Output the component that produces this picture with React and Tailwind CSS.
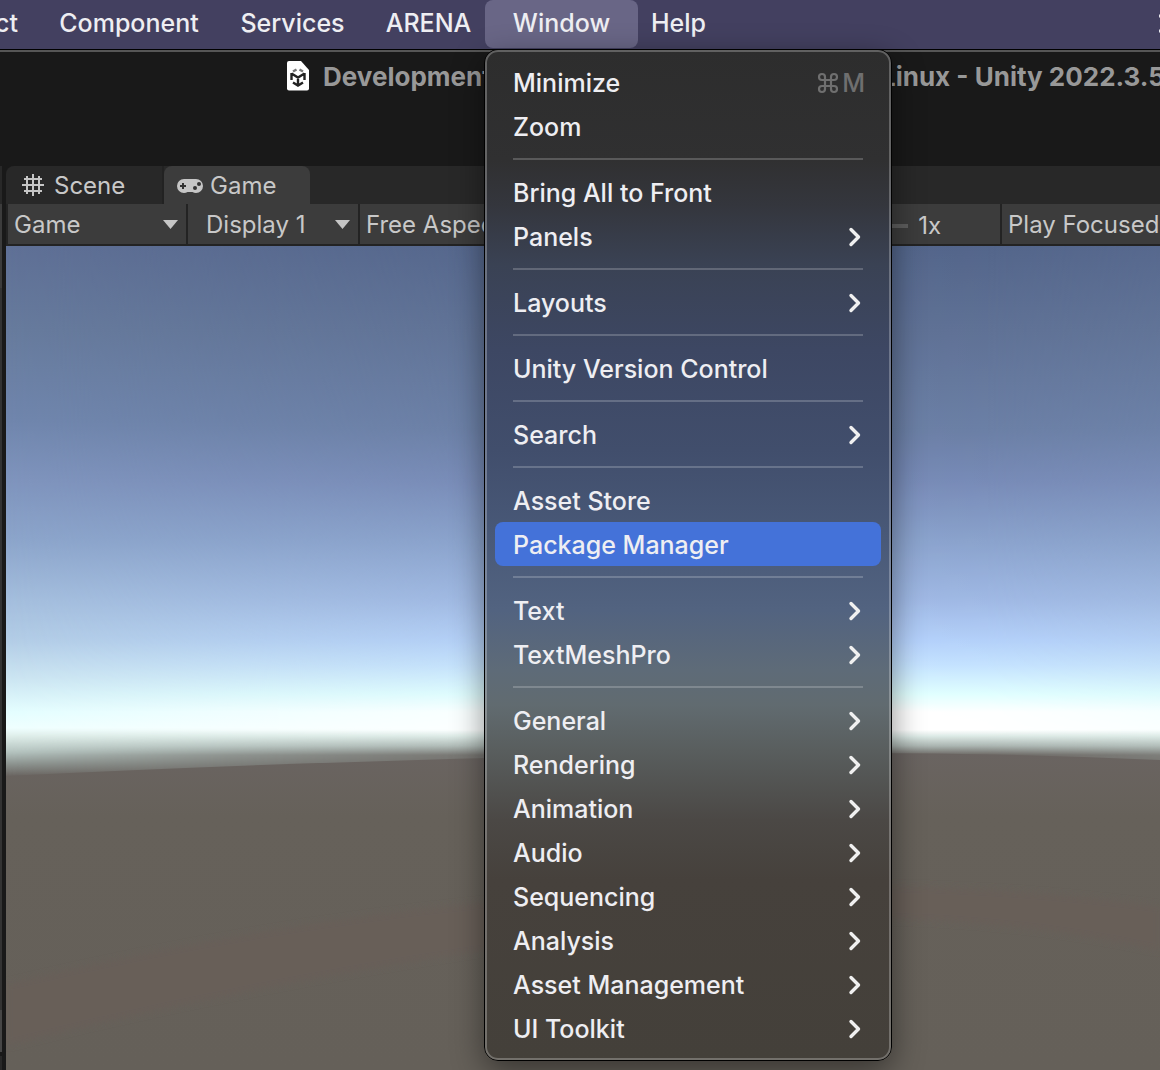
import React from "react";

const skyLeft = [
  [246, "#5f7096"], [330, "#677b9d"], [420, "#7086ad"], [480, "#7f94bd"], [540, "#8ca5cb"], [600, "#a4bedd"], [640, "#b3cde6"],
  [680, "#cde6f2"], [712, "#e4feff"], [728, "#efffff"], [736, "#dfeeea"], [752, "#b5c4c0"], [764, "#8d9490"], [776, "#6a6561"],
];
const skyCenter = [
  [246, "#53658a"], [330, "#5f7195"], [430, "#6b7fa5"], [480, "#778ab6"], [540, "#8aa2cc"], [600, "#9fb8e4"], [640, "#b3d0fa"],
  [665, "#c4e2ff"], [694, "#e0ffff"], [712, "#ffffff"], [730, "#ffffff"], [736, "#dce9e5"], [746, "#a9b3af"], [755, "#6a6561"],
];

function Stops({ list }) {
  return list.map(([y, c]) => <stop key={y} offset={(y - 246) / 824} stopColor={c} />);
}

function Scene() {
  return (
    <svg className="absolute inset-0 h-full w-full" viewBox="0 0 1154 824" preserveAspectRatio="none" aria-hidden="true">
      <defs>
        <linearGradient id="edge" x1="0" y1="0" x2="0" y2="1"><Stops list={skyLeft} /></linearGradient>
        <linearGradient id="middle" x1="0" y1="0" x2="0" y2="1"><Stops list={skyCenter} /></linearGradient>
        <linearGradient id="fade" x1="0" y1="0" x2="1" y2="0">
          <stop offset="0" stopColor="#000" />
          <stop offset="0.2" stopColor="#707070" />
          <stop offset="0.42" stopColor="#d0d0d0" />
          <stop offset="0.7" stopColor="#fff" />
          <stop offset="0.85" stopColor="#f4f4f4" />
          <stop offset="1" stopColor="#b0b0b0" />
        </linearGradient>
        <linearGradient id="ground" x1="0" y1="0" x2="0" y2="1">
          <stop offset="0" stopColor="#6a6461" />
          <stop offset="0.2" stopColor="#66615a" />
          <stop offset="1" stopColor="#656059" />
        </linearGradient>
        <mask id="blend"><rect width="1154" height="824" fill="url(#fade)" /></mask>
        <filter id="soft"><feGaussianBlur stdDeviation="3" /></filter>
      </defs>
      <rect width="1154" height="824" fill="url(#edge)" />
      <rect width="1154" height="824" fill="url(#middle)" mask="url(#blend)" />
      <path d="M0 530Q480 507 844 507Q1000 507 1154 514V824H0Z" fill="url(#ground)" />
      <path d="M0 738Q240 680 478 656Q860 620 1154 660V705Q860 640 478 705Q240 740 0 800Z" fill="#685f59" filter="url(#soft)" />
    </svg>
  );
}

const menu = [
  [["Minimize", "key"], ["Zoom"]],
  [["Bring All to Front"], ["Panels", "sub"]],
  [["Layouts", "sub"]],
  [["Unity Version Control"]],
  [["Search", "sub"]],
  [["Asset Store"], ["Package Manager", "on"]],
  [["Text", "sub"], ["TextMeshPro", "sub"]],
  [["General", "sub"], ["Rendering", "sub"], ["Animation", "sub"], ["Audio", "sub"], ["Sequencing", "sub"], ["Analysis", "sub"], ["Asset Management", "sub"], ["UI Toolkit", "sub"]],
];

function Item({ label, kind }) {
  return (
    <button
      role="menuitem"
      className={
        "flex h-11 w-full items-center justify-between whitespace-nowrap rounded-lg pl-[18px] pr-4 pt-0.5 text-left " +
        (kind === "on" ? "bg-[#4472d9]" : "")
      }
    >
      <span>{label}</span>
      {kind === "sub" && (
        <svg className="mr-1" width="13" height="20" viewBox="0 0 13 20" fill="none" stroke="#f0f0f0" strokeWidth="3.4" strokeLinecap="round" strokeLinejoin="round" aria-hidden="true">
          <path d="M3 2.500l7.500 7.500-7.500 7.500" />
        </svg>
      )}
      {kind === "key" && (
        <span className="flex items-center gap-0.5 text-[#6f6f6f]">
          <svg width="24" height="24" viewBox="0 0 24 24" fill="none" stroke="currentColor" strokeWidth="2.2" aria-hidden="true">
            <path d="M15 6v12a3 3 0 1 0 3-3H6a3 3 0 1 0 3 3V6a3 3 0 1 0-3 3h12a3 3 0 1 0-3-3" />
          </svg>
          M
        </span>
      )}
    </button>
  );
}

function WindowMenu() {
  return (
    <div
      role="menu"
      aria-label="Window"
      className="absolute -left-px top-[49px] z-10 w-[408px] rounded-[14px] border border-black bg-[linear-gradient(to_bottom,#2d2d2d_0px,#303031_110px,#34363d_155px,#3a4254_215px,#3d4763_300px,#414e6c_400px,#485877_480px,#526380_560px,#5e6b78_620px,#616b70_655px,#595e5e_700px,#4b4845_770px,#46413c_830px,#44403a_1009px)] shadow-[0_10px_32px_rgba(0,0,0,0.45)]"
    >
      <div className="rounded-[13px] border-2 border-white/25 p-2">
        {menu.map((group, i) => (
          <div key={group[0][0]}>
            {i > 0 && (
              <div role="separator" className="flex h-[22px] items-center px-[18px]">
                <div className="h-0.5 w-full bg-white/20" />
              </div>
            )}
            {group.map(([label, kind]) => <Item key={label} label={label} kind={kind} />)}
          </div>
        ))}
      </div>
    </div>
  );
}

function MenuBar() {
  return (
    <nav className="relative z-10 flex h-[49px] items-start bg-[#434060] text-[25px] font-medium leading-[46px] text-[#eeeef2]">
      <button className="flex w-[18px] justify-end overflow-hidden text-left">Object</button>
      <button className="ml-[20px] w-[182px] text-center">Component</button>
      <button className="w-[145px] text-center">Services</button>
      <button className="w-[120px] pl-[7px] text-center">ARENA</button>
      <div className="relative">
        <button className="block h-12 w-[153px] rounded-lg bg-[#696686] pb-0.5" aria-expanded="true" aria-haspopup="menu">Window</button>
        <WindowMenu />
      </div>
      <button className="w-[81px] text-center">Help</button>
      <svg className="ml-auto mt-[14px]" width="1" height="20" viewBox="0 0 1 20" aria-hidden="true">
        <path d="M0 2h1M0 17h1" stroke="#e8e8ee" strokeWidth="3" />
      </svg>
    </nav>
  );
}

function UnityIcon() {
  return (
    <svg width="24" height="31" viewBox="0 0 24 31" aria-hidden="true">
      <path d="M3 0h12l8 9v18.500q0 2-2 2H3q-2 0-2-2V2q0-2 2-2z" fill="#fff" />
      <g fill="none" stroke="#222" strokeWidth="2.4">
        <path d="M10.500 8.500L7 10.500M13.500 8.500L17 10.500" stroke="#777" />
        <path d="M5.500 12v7M18.500 12v7M7 21.500l5 3 5-3M5.500 12.500l6.500 4 6.500-4M12 16v8" />
      </g>
    </svg>
  );
}

function Caret() {
  return <svg width="16" height="10" viewBox="0 0 16 10" aria-hidden="true"><path d="M0 0h15L7.500 9z" fill="#c6c6c6" /></svg>;
}

export default function App() {
  return (
    <div className="flex min-h-screen flex-col overflow-hidden bg-[#191919] font-['Inter',sans-serif]">
      <MenuBar />
      <header className="flex h-[117px] items-start gap-[13px] overflow-hidden whitespace-nowrap border-t border-black pl-[286px] text-[26px] font-bold leading-[34px] text-[#989898] shadow-[inset_0_2px_0_#565656]">
        <div className="mt-[11px]"><UnityIcon /></div>
        <h1 className="mt-[10px] flex flex-1 justify-between">
          <span className="w-[162px] overflow-hidden">Development</span>
          <span className="w-[279px]">Linux - Unity 2022.3.5</span>
        </h1>
      </header>
      <div className="flex flex-1">
        <aside className="mr-1 flex w-0.5 flex-col bg-[#333]">
          <div className="h-[38px] bg-[#282828]" />
          <div className="h-[84px] bg-[#3c3c3c]" />
          <div className="mt-auto h-[42px] bg-[#464646]" />
          <div className="h-[18px] border-t-4 border-[#191919] bg-[#282828]" />
        </aside>
        <main className="flex min-w-0 flex-1 flex-col text-2xl text-[#c8c8c8]">
          <div role="tablist" className="flex h-[38px] rounded-tl-lg bg-[#282828]">
            <button role="tab" className="flex w-[158px] items-center gap-[10px] border-r-2 border-[#222] pl-4">
              <svg width="22" height="22" viewBox="0 0 22 22" fill="none" stroke="#c6c6c6" strokeWidth="2" aria-hidden="true">
                <path d="M5 2v18M17 2v18M2 5h18M2 17h18M11 0v22M0 11h22" />
              </svg>
              <span className="pt-0.5">Scene</span>
            </button>
            <button role="tab" aria-selected="true" className="flex w-[146px] items-center gap-[6px] rounded-t-lg bg-[#3c3c3c] pl-3 pt-0.5">
              <svg width="28" height="16" viewBox="0 0 28 16" aria-hidden="true">
                <path d="M8 1h12a7 7 0 0 1 0 14q-2 0-3.500-1h-5q-1.500 1-3.500 1A7 7 0 0 1 8 1z" fill="#c6c6c6" />
                <path d="M7 5v6M4 8h6" stroke="#333" strokeWidth="2" />
                <circle cx="19" cy="10" r="2" fill="#333" /><circle cx="23" cy="6" r="2" fill="#333" />
              </svg>
              <span>Game</span>
            </button>
          </div>
          <div className="flex h-[42px] border-b-2 border-[#232323] bg-[#3c3c3c]">
            <button className="flex w-[182px] items-center justify-between border-x-2 border-[#232323] pl-1.5 pr-[7px] pt-0.5">Game<Caret /></button>
            <button className="flex w-[172px] items-center justify-between border-r-2 border-[#232323] pl-[18px] pr-[7px] pt-0.5">Display 1<Caret /></button>
            <button className="w-[160px] overflow-hidden whitespace-nowrap pl-1.5 pt-0.5 text-left">Free Aspect</button>
            <div className="ml-auto flex w-[294px] items-center justify-end gap-2.5 border-r-2 border-[#232323] pr-[59px] pt-1">
              <div className="h-1 w-32 bg-[#5e5e5e]" />1x
            </div>
            <button className="w-[158px] whitespace-nowrap pl-1.5 pt-0.5 text-left">Play Focused</button>
          </div>
          <div className="relative flex-1"><Scene /></div>
        </main>
      </div>
    </div>
  );
}
